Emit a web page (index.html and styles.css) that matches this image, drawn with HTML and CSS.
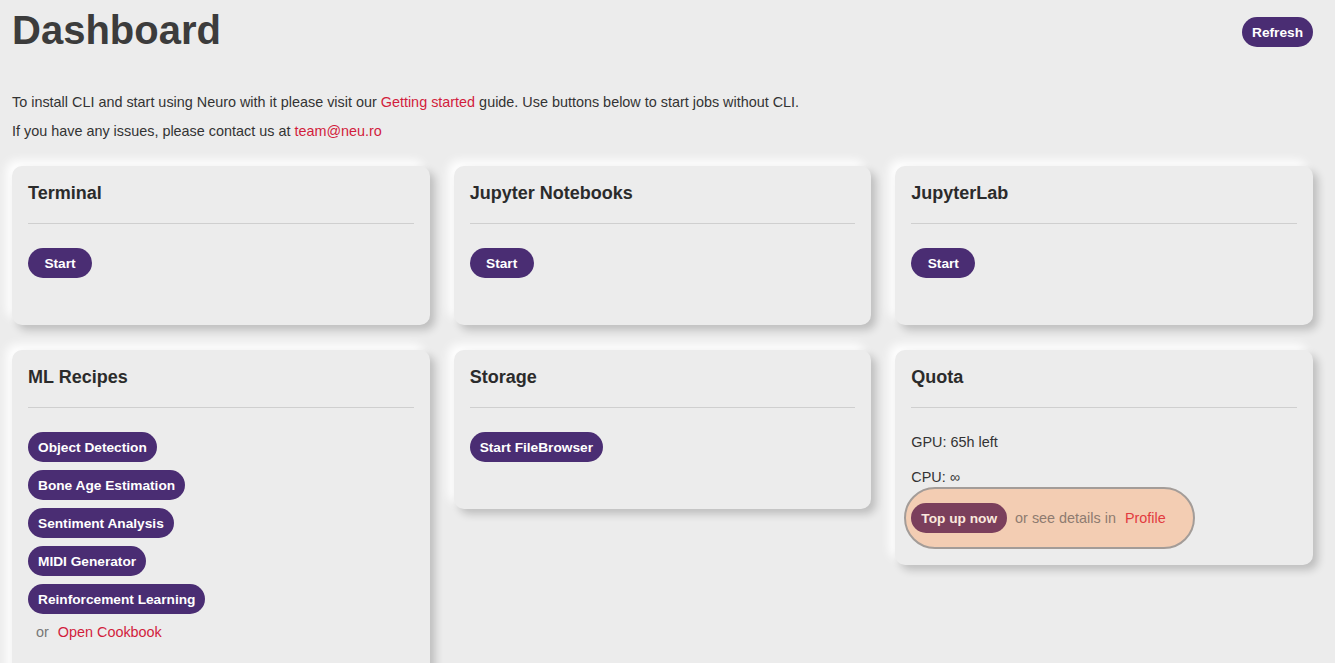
FILE: index.html
```html
<!DOCTYPE html>
<html lang="en">
<head>
<meta charset="utf-8">
<title>Dashboard</title>
<link rel="stylesheet" href="styles.css">
</head>
<body>
<div class="page">
  <header class="header">
    <h1 class="title">Dashboard</h1>
    <button class="btn btn-refresh">Refresh</button>
  </header>
  <p class="intro">To install CLI and start using Neuro with it please visit our <a class="link" href="#">Getting started</a> guide. Use buttons below to start jobs without CLI.</p>
  <p class="intro">If you have any issues, please contact us at <a class="link" href="#">team@neu.ro</a></p>

  <div class="grid">
    <section class="card">
      <h2 class="card-title">Terminal</h2>
      <div class="divider"></div>
      <div class="card-body"><button class="btn btn-start">Start</button></div>
    </section>
    <section class="card">
      <h2 class="card-title">Jupyter Notebooks</h2>
      <div class="divider"></div>
      <div class="card-body"><button class="btn btn-start">Start</button></div>
    </section>
    <section class="card">
      <h2 class="card-title">JupyterLab</h2>
      <div class="divider"></div>
      <div class="card-body"><button class="btn btn-start">Start</button></div>
    </section>

    <section class="card">
      <h2 class="card-title">ML Recipes</h2>
      <div class="divider"></div>
      <div class="card-body recipes">
        <button class="btn">Object Detection</button>
        <button class="btn">Bone Age Estimation</button>
        <button class="btn">Sentiment Analysis</button>
        <button class="btn">MIDI Generator</button>
        <button class="btn">Reinforcement Learning</button>
        <div class="cookbook"><span class="muted">or</span><a class="link" href="#">Open Cookbook</a></div>
      </div>
    </section>
    <section class="card">
      <h2 class="card-title">Storage</h2>
      <div class="divider"></div>
      <div class="card-body"><button class="btn">Start FileBrowser</button></div>
    </section>
    <section class="card">
      <h2 class="card-title">Quota</h2>
      <div class="divider"></div>
      <div class="card-body quota">
        <p class="quota-line">GPU: 65h left</p>
        <p class="quota-line">CPU: ∞</p>
        <div class="topup">
          <button class="btn btn-topup">Top up now</button>
          <span class="topup-text">or see details in</span>
          <a class="link link-profile" href="#">Profile</a>
        </div>
      </div>
    </section>
  </div>
</div>
</body>
</html>
```

FILE: styles.css
```css
* { box-sizing: border-box; }

html, body {
  margin: 0;
  background: #ececec;
}

body {
  font-family: "Liberation Sans", Arial, sans-serif;
  color: #333;
  font-size: 14.4px;
}

.page {
  padding: 6px 22px 0 12px;
}

.header {
  display: flex;
  justify-content: space-between;
  align-items: flex-start;
}

.title {
  margin: 0;
  font-size: 40px;
  line-height: 49px;
  font-weight: bold;
  color: #3c3c3c;
}

.btn {
  display: inline-flex;
  align-items: center;
  justify-content: center;
  height: 30px;
  min-width: 64px;
  padding: 0 10px;
  border: none;
  border-radius: 15px;
  background: #4a2d73;
  color: #fff;
  font-family: "Liberation Sans", Arial, sans-serif;
  font-weight: bold;
  font-size: 13.7px;
  cursor: pointer;
}

.btn-refresh {
  margin-top: 11px;
}

.intro {
  margin: 0 0 9px;
  line-height: 20px;
  color: #333;
}

.header + .intro {
  margin-top: 37px;
}

.link {
  color: #d21c3c;
  text-decoration: none;
}

.grid {
  display: grid;
  grid-template-columns: repeat(3, 1fr);
  gap: 25px 24px;
  align-items: start;
  margin-top: 25px;
}

.card {
  background: #ececec;
  border-radius: 10px;
  padding: 16px;
  box-shadow: 5px 5px 9px rgba(0, 0, 0, 0.2), -6px -6px 10px rgba(255, 255, 255, 0.95);
}

.card-title {
  margin: 0;
  font-size: 18px;
  line-height: 23px;
  font-weight: bold;
  color: #2b2b2b;
}

.divider {
  height: 1px;
  background: #cfcfcf;
  margin-top: 18px;
}

.card-body {
  margin-top: 24px;
  min-height: 61px;
}

.recipes {
  display: flex;
  flex-direction: column;
  align-items: flex-start;
  gap: 8px;
  padding-bottom: 31px;
}

.cookbook {
  display: flex;
  gap: 9px;
  padding-left: 8px;
  line-height: 20px;
}

.muted {
  color: #777;
}

.quota-line {
  margin: 0 0 15px;
  line-height: 20px;
  color: #333;
}

.quota-line + .quota-line {
  margin-bottom: 0;
}

.topup {
  display: inline-flex;
  align-items: center;
  gap: 8px;
  height: 62px;
  margin-left: -7px;
  padding: 0 27px 0 5px;
  border: 2px solid #a39c98;
  border-radius: 31px;
  background: #f3cdb3;
}

.btn-topup {
  min-width: 0;
  background: #7b3f5c;
  color: #fbe9de;
}

.topup-text {
  color: #8e7b70;
}

.link-profile {
  margin-left: 1px;
  color: #e23a3e;
}
```
